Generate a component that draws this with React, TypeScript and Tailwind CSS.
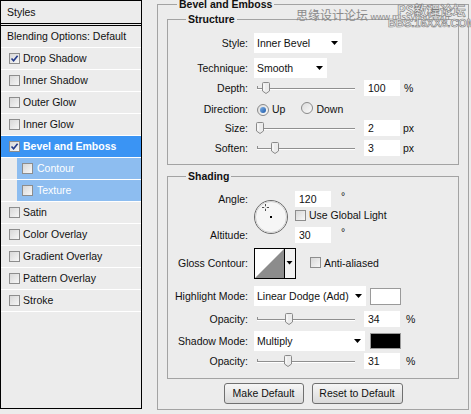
import React from "react";

function Check({ checked = false }: { checked?: boolean }) {
  return (
    <span className="relative inline-block h-[11px] w-[11px] shrink-0 border border-[#8d8d8d] bg-linear-to-br from-[#d8d8d8] to-[#f7f7f7]">
      {checked && (
        <svg viewBox="0 0 9 9" className="absolute left-0 top-0 h-[9px] w-[9px]">
          <path d="M1.5 4.5 L3.6 6.8 L7.6 1.8" fill="none" stroke="#21398a" strokeWidth="1.6" />
        </svg>
      )}
    </span>
  );
}

function Radio({ checked = false }: { checked?: boolean }) {
  return (
    <span className="relative inline-flex h-[12px] w-[12px] shrink-0 items-center justify-center rounded-full border border-[#8a8a8a] bg-linear-to-br from-[#dcdcdc] to-[#fafafa]">
      {checked && <span className="h-[6px] w-[6px] rounded-full bg-linear-to-br from-[#7fb2e8] to-[#1d5aa8]" />}
    </span>
  );
}

function Arrow() {
  return (
    <svg viewBox="0 0 7 4" className="h-[4px] w-[7px] shrink-0">
      <path d="M0 0 H7 L3.5 4 Z" fill="#000" />
    </svg>
  );
}

function Select({ w, text }: { w: string; text: string }) {
  return (
    <div className={`flex h-[20px] ${w} items-center justify-between bg-white pl-[3px] pr-[4px]`}>
      <span>{text}</span>
      <Arrow />
    </div>
  );
}

function Input({ v }: { v: string }) {
  return <div className="flex h-[16px] w-[36px] items-center bg-white pl-[4px] shrink-0">{v}</div>;
}

function Slider({ pos }: { pos: number }) {
  return (
    <div className="relative h-[16px] w-[110px] shrink-0">
      <div className="absolute left-[3px] top-[8px] h-px w-[98px] bg-[#8f8f8f]" />
      <div className="absolute left-[3px] top-[9px] h-px w-[98px] bg-white" />
      <div className="absolute left-[3px] top-[6px] h-[3px] w-px bg-[#8f8f8f]" />
      <svg viewBox="0 0 8 12" className="absolute top-[2px] h-[12px] w-[8px]" style={{ left: pos - 4 }}>
        <path d="M1.5 0.5 H6.5 Q7.5 0.5 7.5 1.5 V9 L4 11.5 L0.5 9 V1.5 Q0.5 0.5 1.5 0.5 Z" fill="#ececec" stroke="#8a8a8a" />
        <path d="M2 2 V8.5" stroke="#fff" />
      </svg>
    </div>
  );
}

const Label = ({ children }: { children: React.ReactNode }) => (
  <div className="w-[80px] shrink-0 text-right">{children}</div>
);

const items = [
  { label: "Drop Shadow", checked: true },
  { label: "Inner Shadow" },
  { label: "Outer Glow" },
  { label: "Inner Glow" },
  { label: "Bevel and Emboss", checked: true, sel: true },
  { label: "Contour", sub: true },
  { label: "Texture", sub: true },
  { label: "Satin" },
  { label: "Color Overlay" },
  { label: "Gradient Overlay" },
  { label: "Pattern Overlay" },
  { label: "Stroke" },
];

function LeftPanel() {
  return (
    <div className="flex h-[409px] w-[142px] shrink-0 flex-col border border-black bg-[#ececec]">
      <div className="flex h-[25px] items-center border-b-[3px] border-double border-black pl-[6px]">Styles</div>
      <div className="flex h-[22px] items-center border-b border-white pl-[6px]">Blending Options: Default</div>
      {items.map((it) =>
        it.sub ? (
          <div key={it.label} className="flex h-[22px] border-b border-white">
            <div className="ml-[16px] flex flex-1 items-center gap-[4px] bg-[#8dbdf0] pl-[5px] text-white">
              <Check />
              <span>{it.label}</span>
            </div>
          </div>
        ) : (
          <div
            key={it.label}
            className={`flex h-[22px] items-center gap-[3px] border-b border-white pl-[8px] ${
              it.sel ? "bg-[#3a94f4] font-bold text-white" : ""
            }`}
          >
            <Check checked={it.checked} />
            <span>{it.label}</span>
          </div>
        )
      )}
    </div>
  );
}

function Dial() {
  return (
    <svg viewBox="0 0 36 36" className="h-[36px] w-[36px] shrink-0">
      <circle cx="18" cy="18" r="16.5" fill="#f6f6f6" stroke="#6a6a6a" strokeWidth="1" />
      <circle cx="18" cy="18" r="15.5" fill="none" stroke="#d0d0d0" strokeWidth="1" />
      <rect x="17" y="17" width="2" height="2" fill="#000" />
      <path d="M12.5 5 V12 M9 8.5 H16" stroke="#222" strokeWidth="0.8" />
      <circle cx="12.5" cy="8.5" r="1.3" fill="#f6f6f6" />
    </svg>
  );
}

function GlossContour() {
  return (
    <svg viewBox="0 0 42 31" className="h-[31px] w-[42px] shrink-0">
      <rect x="0.5" y="0.5" width="41" height="30" fill="#fff" stroke="#000" />
      <path d="M1 30 L30 1 V30 Z" fill="#8c8c8c" />
      <rect x="30" y="1" width="11" height="29" fill="#f2f2f2" />
      <path d="M30.5 1 V30" stroke="#000" />
      <path d="M32.5 13 H38.5 L35.5 16.5 Z" fill="#000" />
    </svg>
  );
}

export default function App() {
  return (
    <div className="relative flex h-[414px] w-[471px] overflow-hidden bg-[#ececec] font-['Liberation_Sans',Arial,sans-serif] text-[10.5px] leading-[13px] text-[#111]">
      <LeftPanel />
      <fieldset className="ml-[15px] flex h-[410px] w-[311px] flex-col border border-[#a3a3a3] px-[9px] pb-[0px]">
        <legend className="ml-[10px] px-[2px] font-bold leading-[8px]">Bevel and Emboss</legend>
        <fieldset className="mt-[5px] flex w-[292px] flex-col border border-[#a3a3a3] pb-[8px] pt-[8px]">
          <legend className="ml-[18px] px-[2px] font-bold leading-[12px]">Structure</legend>
          <div className="flex h-[20px] items-center">
            <Label>Style:</Label>
            <div className="ml-[6px]">
              <Select w="w-[88px]" text="Inner Bevel" />
            </div>
          </div>
          <div className="mt-[5px] flex h-[20px] items-center">
            <Label>Technique:</Label>
            <div className="ml-[6px]">
              <Select w="w-[73px]" text="Smooth" />
            </div>
          </div>
          <div className="mt-[2px] flex h-[16px] items-center">
            <Label>Depth:</Label>
            <div className="ml-[6px] flex items-center">
              <Slider pos={12} />
              <Input v="100" />
              <span className="ml-[4px]">%</span>
            </div>
          </div>
          <div className="mt-[5px] flex h-[16px] items-center">
            <Label>Direction:</Label>
            <div className="ml-[6px] flex items-center">
              <span className="ml-[3px]"><Radio checked /></span>
              <span className="ml-[3px]">Up</span>
              <span className="ml-[16px]"><Radio /></span>
              <span className="ml-[3px]">Down</span>
            </div>
          </div>
          <div className="mt-[3px] flex h-[16px] items-center">
            <Label>Size:</Label>
            <div className="ml-[6px] flex items-center">
              <Slider pos={6} />
              <Input v="2" />
              <span className="ml-[3px]">px</span>
            </div>
          </div>
          <div className="mt-[4px] flex h-[16px] items-center">
            <Label>Soften:</Label>
            <div className="ml-[6px] flex items-center">
              <Slider pos={21} />
              <Input v="3" />
              <span className="ml-[3px]">px</span>
            </div>
          </div>
        </fieldset>
        <fieldset className="mt-[5px] flex w-[292px] flex-col border border-[#a3a3a3] pb-[9px] pt-[9px]">
          <legend className="ml-[18px] px-[2px] font-bold leading-[12px]">Shading</legend>
          <div className="flex h-[52px]">
            <div className="flex w-[80px] shrink-0 flex-col justify-between text-right">
              <div className="leading-[16px]">Angle:</div>
              <div className="leading-[16px]">Altitude:</div>
            </div>
            <div className="ml-[5px] flex items-center">
              <Dial />
            </div>
            <div className="ml-[6px] flex flex-col">
              <div className="flex h-[16px] items-center">
                <Input v="120" />
                <span className="ml-[10px] -translate-y-[3px]">°</span>
              </div>
              <div className="mt-[2px] flex h-[13px] items-center gap-[3px]">
                <Check />
                <span>Use Global Light</span>
              </div>
              <div className="mt-[5px] flex h-[16px] items-center">
                <Input v="30" />
                <span className="ml-[10px] -translate-y-[3px]">°</span>
              </div>
            </div>
          </div>
          <div className="mt-[5px] flex h-[31px] items-center">
            <Label>Gloss Contour:</Label>
            <div className="ml-[6px] flex items-center">
              <GlossContour />
              <span className="ml-[14px]"><Check /></span>
              <span className="ml-[3px]">Anti-aliased</span>
            </div>
          </div>
          <div className="mt-[7px] flex h-[20px] items-center">
            <Label>Highlight Mode:</Label>
            <div className="ml-[6px] flex items-center">
              <Select w="w-[112px]" text="Linear Dodge (Add)" />
              <div className="ml-[4px] h-[17px] w-[31px] border border-[#9a9a9a] bg-white" />
            </div>
          </div>
          <div className="mt-[5px] flex h-[16px] items-center">
            <Label>Opacity:</Label>
            <div className="ml-[6px] flex items-center">
              <Slider pos={35} />
              <Input v="34" />
              <span className="ml-[6px]">%</span>
            </div>
          </div>
          <div className="mt-[4px] flex h-[20px] items-center">
            <Label>Shadow Mode:</Label>
            <div className="ml-[6px] flex items-center">
              <Select w="w-[111px]" text="Multiply" />
              <div className="ml-[5px] h-[16px] w-[31px] border border-[#9a9a9a] bg-black" />
            </div>
          </div>
          <div className="mt-[2px] flex h-[16px] items-center">
            <Label>Opacity:</Label>
            <div className="ml-[6px] flex items-center">
              <Slider pos={34} />
              <Input v="31" />
              <span className="ml-[6px]">%</span>
            </div>
          </div>
        </fieldset>
        <div className="mt-[4px] flex justify-center gap-[8px]">
          <div className="flex h-[21px] w-[80px] items-center justify-center rounded-[3px] border border-[#707070] bg-linear-to-b from-[#f6f6f6] to-[#dadada]">
            Make Default
          </div>
          <div className="flex h-[21px] w-[91px] items-center justify-center rounded-[3px] border border-[#707070] bg-linear-to-b from-[#f6f6f6] to-[#dadada]">
            Reset to Default
          </div>
        </div>
      </fieldset>
      <div className="absolute left-[296px] top-[8px] whitespace-nowrap font-['Noto_Sans_CJK_SC',sans-serif] text-[12px] leading-[13px] text-[#8a8a8a]">
        思缘设计论坛<span className="font-['Liberation_Sans',sans-serif] text-[9px]"> www.missyuan.com</span>
      </div>
      <div className="absolute left-[397px] top-[3px] whitespace-nowrap font-['Noto_Sans_CJK_SC',sans-serif] text-[13px] font-bold leading-[14px] text-[#ececec] [-webkit-text-stroke:0.6px_#7a7a7a]">
        PS教程论坛
      </div>
      <div className="absolute left-[388px] top-[17px] whitespace-nowrap font-['Liberation_Sans',sans-serif] text-[11px] font-bold leading-[12px] text-[#ececec] [-webkit-text-stroke:0.6px_#7a7a7a]">
        BBS.16XX8.COM
      </div>
    </div>
  );
}
